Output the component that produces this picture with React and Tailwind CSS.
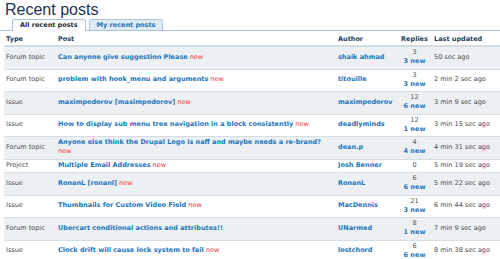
import React from "react";

const rows = [
  { type: "Forum topic", title: "Can anyone give suggestion Please", isNew: true, author: "shaik ahmad", replies: "3", newR: "3 new", updated: "50 sec ago" },
  { type: "Forum topic", title: "problem with hook_menu and arguments", isNew: true, author: "titouille", replies: "3", newR: "3 new", updated: "2 min 2 sec ago" },
  { type: "Issue", title: "maximpodorov [maximpodorov]", isNew: true, author: "maximpodorov", replies: "12", newR: "6 new", updated: "3 min 9 sec ago" },
  { type: "Issue", title: "How to display sub menu tree navigation in a block consistently", isNew: true, author: "deadlyminds", replies: "12", newR: "1 new", updated: "3 min 15 sec ago" },
  { type: "Forum topic", title: "Anyone else think the Drupal Logo is naff and maybe needs a re-brand?", isNew: true, author: "dean.p", replies: "4", newR: "4 new", updated: "4 min 31 sec ago" },
  { type: "Project", title: "Multiple Email Addresses", isNew: true, author: "Josh Benner", replies: "0", newR: null, updated: "5 min 19 sec ago" },
  { type: "Issue", title: "RonanL [ronanl]", isNew: true, author: "RonanL", replies: "6", newR: "6 new", updated: "5 min 22 sec ago" },
  { type: "Issue", title: "Thumbnails for Custom Video Field", isNew: true, author: "MacDennis", replies: "21", newR: "3 new", updated: "6 min 44 sec ago" },
  { type: "Forum topic", title: "Ubercart conditional actions and attributes!!", isNew: false, author: "UNarmed", replies: "8", newR: "1 new", updated: "7 min 9 sec ago" },
  { type: "Issue", title: "Clock drift will cause lock system to fail", isNew: true, author: "lostchord", replies: "6", newR: "6 new", updated: "8 min 38 sec ago" },
];

export default function App() {
  return (
    <div className="w-[500px] h-[259px] overflow-hidden bg-white" style={{ fontFamily: '"DejaVu Sans", Verdana, sans-serif' }}>
      <h2 className="pl-[5px] pt-[2px] text-[16px] leading-[16px] text-[#1b3352] font-normal" style={{ fontFamily: '"Liberation Sans", Arial, sans-serif' }}>
        Recent posts
      </h2>
      <div className="mt-[1px] flex items-end gap-[3px] pl-[12px] border-b border-[#a9c4d8] h-[12px]">
        <div className="h-[12px] px-[7px] border border-b-0 border-[#a9c4d8] rounded-t-[3px] bg-white text-[6.5px] leading-[11px] font-bold text-[#1b2b3a] -mb-px pb-px">
          All recent posts
        </div>
        <div className="h-[11px] px-[7px] border border-b-0 border-[#a9c4d8] rounded-t-[3px] bg-[#dfeaf2] text-[6.5px] leading-[11px] font-bold text-[#1b74b8]">
          My recent posts
        </div>
      </div>
      <table className="ml-[4px] w-[496px] table-fixed border-collapse text-[6.5px] leading-[9px]">
        <colgroup>
          <col className="w-[52px]" />
          <col className="w-[280px]" />
          <col className="w-[61px]" />
          <col className="w-[35px]" />
          <col className="w-[68px]" />
        </colgroup>
        <thead>
          <tr className="border-b-2 border-[#d3dde6] text-[#27405a] font-bold text-left">
            <th className="px-[2px] pt-[4px] pb-[1px] text-left">Type</th>
            <th className="px-[2px] pt-[4px] pb-[1px] text-left">Post</th>
            <th className="px-[2px] pt-[4px] pb-[1px] text-left">Author</th>
            <th className="px-0 pt-[4px] pb-[1px] text-center">Replies</th>
            <th className="px-[2px] pt-[4px] pb-[1px] text-left">Last updated</th>
          </tr>
        </thead>
        <tbody>
          {rows.map((r, i) => (
            <tr key={i} className={(i % 2 === 0 ? "bg-[#edf0f3]" : "bg-white") + " border-b border-[#d6dde3] align-middle"}>
              <td className="px-[2px] pt-[1px] pb-[2px] text-[#4a4a4a]">{r.type}</td>
              <td className="px-[2px] pt-[1px] pb-[2px]">
                <span className="font-bold text-[#1d75bb]">{r.title}</span>
                {r.isNew && <span className="text-[#f03030]"> new</span>}
              </td>
              <td className="px-[2px] pt-[1px] pb-[2px] font-bold text-[#1d75bb]">{r.author}</td>
              <td className={"px-0 text-center " + (r.newR ? "pt-[1.25px] pb-[2.25px]" : "pt-[1.25px] pb-[2.25px]")}>
                <div className="text-[#555]">{r.replies}</div>
                {r.newR && <div className="font-bold text-[#1d75bb]">{r.newR}</div>}
              </td>
              <td className="px-[2px] pt-[1px] pb-[2px] text-[#4a4a4a] whitespace-nowrap">{r.updated}</td>
            </tr>
          ))}
        </tbody>
      </table>
    </div>
  );
}
